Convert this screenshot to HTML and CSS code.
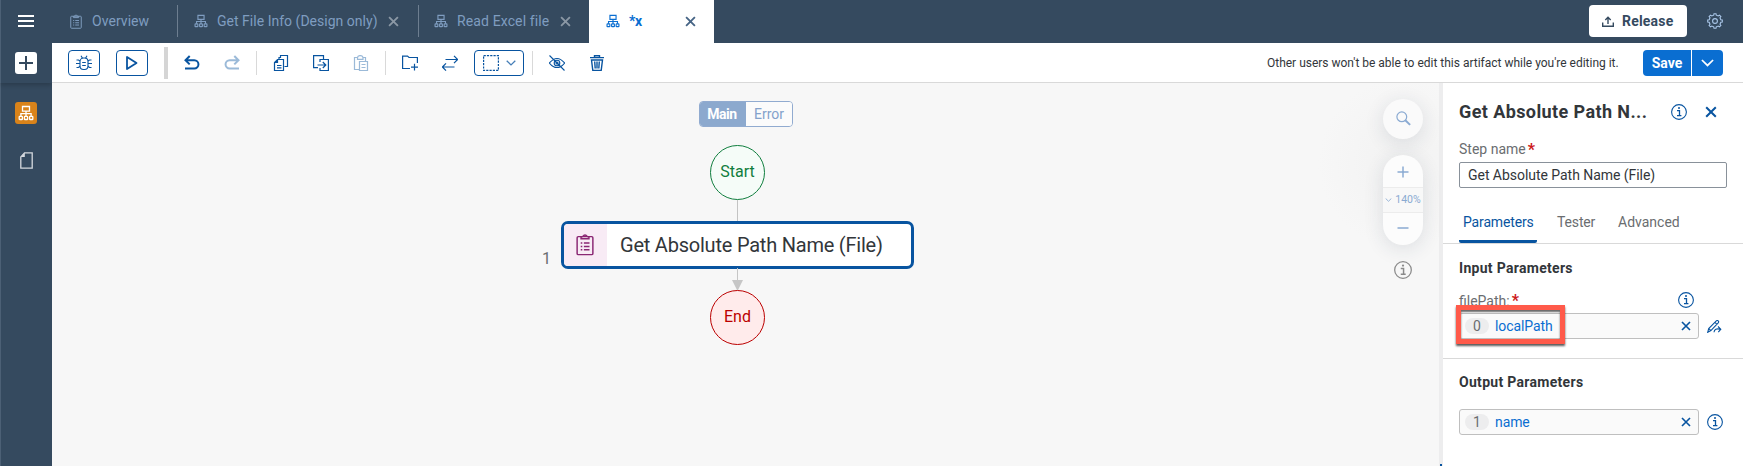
FILE: index.html
```html
<!DOCTYPE html>
<html lang="en">
<head>
<meta charset="utf-8">
<title>Process Builder</title>
<link rel="stylesheet" href="styles.css">
</head>
<body>
<svg class="defs" aria-hidden="true">
  <symbol id="flow" viewBox="0 0 16 16"><g fill="none" stroke="currentColor" stroke-width="1.300"><path d="M4.500 1.500h7v4.600h-7zM8 6v5M2.900 11V8.600h10.200V11"/><rect x="1.200" y="11.300" width="3.200" height="3.200" rx=".6"/><rect x="6.400" y="11.300" width="3.200" height="3.200" rx=".6"/><rect x="11.600" y="11.300" width="3.200" height="3.200" rx=".6"/></g></symbol>
  <symbol id="clip" viewBox="0 0 16 20"><g fill="none" stroke="currentColor" stroke-width="1.300"><rect x="1" y="3" width="14" height="16" rx="1"/><path d="M4.500 3.300v1.500h7V3.300L9.600 2.600a1.700 1.700 0 0 0-3.200 0z"/><path d="M4.200 8.700h1.400M7 8.700h5M4.200 11.700h1.400M7 11.700h5M4.200 14.700h1.400M7 14.700h5"/></g></symbol>
  <symbol id="x" viewBox="0 0 12 12"><path d="M1.200 1.200l9.600 9.600M10.800 1.200l-9.600 9.600" fill="none" stroke="currentColor" stroke-width="2"/></symbol>
  <symbol id="info" viewBox="0 0 16 16"><circle cx="8" cy="8" r="7.400" fill="none" stroke="currentColor" stroke-width="1.100"/><path d="M6 6.700h2.500v4.800M6 11.700h4.400" fill="none" stroke="currentColor" stroke-width="1.300"/><circle cx="8" cy="4.100" r="1" fill="currentColor"/></symbol>
  <symbol id="down" viewBox="0 0 10 6"><path d="M.7.7L5 4.900 9.300.7" fill="none" stroke="currentColor" stroke-width="1.300"/></symbol>
</svg>
<div class="app">
  <aside class="rail">
    <div class="rail-top">
      <svg class="menu" viewBox="0 0 16 12"><path d="M0 1h16M0 6h16M0 11h16" stroke="#fff" stroke-width="2"/></svg>
      <div class="add"><svg viewBox="0 0 14 14"><path d="M7 0v14M0 7h14" stroke="#354a5f" stroke-width="2"/></svg></div>
    </div>
    <div class="process"><svg><use href="#flow"/></svg></div>
    <svg class="file" viewBox="0 0 13 17"><path d="M4.500.8h7.700v15.400H.8V5z" fill="none" stroke="#d5d9de" stroke-width="1.300"/><path d="M.8 5L4.800.8V5z" fill="#d5d9de"/></svg>
  </aside>
  <div class="work">
    <header class="shell">
      <div class="tab t1"><svg class="ti-clip"><use href="#clip"/></svg><span>Overview</span></div>
      <div class="tab t2"><svg class="ti"><use href="#flow"/></svg><span>Get File Info (Design only)</span><svg class="tx"><use href="#x"/></svg></div>
      <div class="tab t3"><svg class="ti"><use href="#flow"/></svg><span>Read Excel file</span><svg class="tx"><use href="#x"/></svg></div>
      <div class="tab t4"><svg class="ti"><use href="#flow"/></svg><span>*x</span><svg class="tx"><use href="#x"/></svg></div>
      <button class="release"><svg viewBox="0 0 12 11"><path d="M.7 6.500v3.800h10.600V6.500M6 8V1.500M3.300 4L6 1.300 8.700 4" fill="none" stroke="currentColor" stroke-width="1.400"/></svg><span>Release</span></button>
      <svg class="gear" viewBox="0 0 16 16"><g fill="none" stroke="currentColor" stroke-width="1.100"><circle cx="8" cy="8" r="2.400"/><path d="M6.700 2.200L7 .7h2l.3 1.500 1.900.8 1.300-.9 1.400 1.400-.9 1.300.8 1.900 1.500.3v2l-1.500.3-.8 1.900.9 1.300-1.400 1.400-1.300-.9-1.900.8-.3 1.500H7l-.3-1.500-1.900-.8-1.300.9-1.400-1.400.9-1.300-.8-1.900L.7 9V7l1.500-.3.8-1.900-.9-1.300 1.400-1.400 1.300.9z"/></g></svg>
    </header>
    <div class="toolbar">
      <button class="tb bug"><svg viewBox="0 0 16 16"><g fill="none" stroke="currentColor" stroke-width="1.100"><rect x="4" y="3" width="8" height="11.500" rx="3.500"/><path d="M5 .8l1.500 2.400M11 .8L9.500 3.200M.5 5h2L4 6M15.500 5h-2L12 6M0 8.500h4M12 8.500h4M.5 12.500h2L4 11.300M15.500 12.500h-2L12 11.300M6.200 7.500h3.600M6.200 10.500h3.600"/></g></svg></button>
      <button class="tb play"><svg viewBox="0 0 16 16"><path d="M3 2v12L12.500 8z" fill="none" stroke="currentColor" stroke-width="1.800" stroke-linejoin="round"/></svg></button>
      <i class="grip"></i>
      <div class="tool"><svg viewBox="0 0 16 16"><path d="M1.500 5.200h8.800a4 4 0 0 1 0 8.300H1M5.700 1L1.500 5.200l4.200 4.200" fill="none" stroke="currentColor" stroke-width="2"/></svg></div>
      <div class="tool off"><svg viewBox="0 0 16 16"><path d="M14.500 5.200H5.700a4 4 0 0 0 0 8.300H15M10.300 1l4.200 4.200-4.200 4.200" fill="none" stroke="currentColor" stroke-width="2"/></svg></div>
      <i class="sep"></i>
      <div class="tool"><svg viewBox="0 0 16 16"><path d="M4.500 4.500h6v11h-9v-8zM1.500 7.500h3v-3M6 4V2.500h1.500v-2H14.500v11h-3M4 10.500h4.500M4 12.800h4.500" fill="none" stroke="currentColor" stroke-width="1.200"/></svg></div>
      <div class="tool"><svg viewBox="0 0 16 16"><path d="M10.500 4V.6H.6v12H5M7 7V4.500h8.400v11H7V13M4.500 10h8M9.800 7l3 3-3 3" fill="none" stroke="currentColor" stroke-width="1.200"/></svg></div>
      <div class="tool off"><svg viewBox="0 0 16 16"><path d="M6 14.500H1.500v-12h3v1.800H10V2.500h2.500V6M4.500 2.500a2.800 2.400 0 0 1 5.500 0M6.500 6.500h8v9h-8zM8.500 9.500h4M8.500 12.500h4" fill="none" stroke="currentColor" stroke-width="1.200"/></svg></div>
      <i class="sep"></i>
      <div class="tool"><svg viewBox="0 0 16 16"><path d="M15.400 8V2.500H7L5.500 1.100H.6v12.400H8M12.500 8.800v6.700M9 12.200h7" fill="none" stroke="currentColor" stroke-width="1.200"/></svg></div>
      <div class="tool"><svg viewBox="0 0 16 16"><path d="M3.500 4.500h12M12 .9l3.600 3.600L12 8.100M12.500 12H.5M4 8.400L.4 12 4 15.600" fill="none" stroke="currentColor" stroke-width="1.200"/></svg></div>
      <button class="tb select"><svg class="marquee" viewBox="0 0 16 16"><rect x=".6" y=".6" width="14.800" height="14.800" fill="none" stroke="currentColor" stroke-width="1.200" stroke-dasharray="2.200 1.100"/></svg><svg class="chev"><use href="#down"/></svg></button>
      <i class="sep last"></i>
      <div class="tool"><svg viewBox="0 0 16 16"><g fill="none" stroke="currentColor" stroke-width="1.100"><path d="M.4 8q7.600-9 15.200 0-7.600 9-15.200 0zM.5.500l15 15"/><circle cx="8" cy="8" r="2.800"/><circle cx="8" cy="8" r="1"/></g></svg></div>
      <div class="tool"><svg viewBox="0 0 16 16"><path d="M1 2.600h14M5.500 2.200V.7h5v1.500M2.500 5h11l-1.300 10.400H3.800zM5.700 6.500l.5 7M8 6.500v7M10.300 6.500l-.5 7" fill="none" stroke="currentColor" stroke-width="1.400"/></svg></div>
      <span class="notice">Other users won't be able to edit this artifact while you're editing it.</span>
      <div class="save"><button class="save-main"><span>Save</span></button><button class="save-more"><svg><use href="#down"/></svg></button></div>
    </div>
    <div class="body">
      <main class="canvas">
        <div class="segment"><span class="seg-on"><span>Main</span></span><span class="seg-off"><span>Error</span></span></div>
        <div class="node start"><span>Start</span></div>
        <i class="edge"></i>
        <div class="step"><div class="step-icon"><svg><use href="#clip"/></svg></div><span>Get Absolute Path Name (File)</span></div>
        <svg class="arrow" viewBox="0 0 12 23"><path d="M6.500 0v13" stroke="#c6c6c6" stroke-width="1"/><path d="M1 12h11L6.500 23z" fill="#c6c6c6"/></svg>
        <div class="node end"><span>End</span></div>
        <span class="index">1</span>
        <div class="controls">
          <div class="search"><svg viewBox="0 0 15 15"><circle cx="5.800" cy="5.800" r="4.900" fill="none" stroke="currentColor" stroke-width="1.200"/><path d="M9.300 9.300l4.800 4.600" stroke="currentColor" stroke-width="2"/></svg></div>
          <div class="zoom">
            <svg class="zin" viewBox="0 0 12 12"><path d="M6 .5v11M.5 6h11" stroke="currentColor" stroke-width="1.500"/></svg>
            <div class="level"><svg><use href="#down"/></svg><span>140%</span></div>
            <svg class="zout" viewBox="0 0 12 12"><path d="M.5 6h11" stroke="currentColor" stroke-width="1.500"/></svg>
          </div>
          <svg class="help"><use href="#info"/></svg>
        </div>
      </main>
      <div class="splitter"></div>
      <section class="panel">
        <div class="panel-head"><h1>Get Absolute Path N...</h1><svg class="pi"><use href="#info"/></svg><svg class="px"><use href="#x"/></svg></div>
        <label class="step-label"><span>Step name</span><b>*</b></label>
        <div class="field"><span>Get Absolute Path Name (File)</span></div>
        <nav class="ptabs"><span class="on"><span>Parameters</span></span><span class="pt2">Tester</span><span class="pt3">Advanced</span></nav>
        <div class="group inputs">
          <h2>Input Parameters</h2>
          <div class="param-label"><span>filePath:</span><b>*</b><svg class="pi"><use href="#info"/></svg></div>
          <div class="row"><div class="token"><em>0</em><span>localPath</span><svg><use href="#x"/></svg><i class="highlight"></i></div><svg class="pen" viewBox="0 0 15 13"><path d="M.7 12.300l1-3.800L9.300.9q1-.8 1.900 0t0 1.900L3.900 10.600zM1.900 8.600l2 2M8 2.300l2 2M7 12.300c.3-3 2.500-4 6-3.200M11 6.500l2.800 2.700-2.500 2.900" fill="none" stroke="currentColor" stroke-width="1.100"/></svg></div>
        </div>
        <div class="group outputs">
          <h2>Output Parameters</h2>
          <div class="row"><div class="token"><em>1</em><span>name</span><svg><use href="#x"/></svg></div><svg class="pi"><use href="#info"/></svg></div>
        </div>
      </section>
    </div>
  </div>
</div>
</body>
</html>
```

FILE: styles.css
```css
* { box-sizing: border-box; }
body { margin: 0; font: 14px/18px Roboto, "Noto Sans", sans-serif; color: #32363a; overflow: hidden; }
svg { display: block; flex: none; }
button { font: inherit; padding: 0; margin: 0; }
h1, h2 { margin: 0; }
span { white-space: nowrap; }
.defs { position: absolute; width: 0; height: 0; }
.app { display: flex; width: 1743px; height: 466px; }
.rail { width: 52px; background: linear-gradient(#4c6075, #4c6075) 0 0 / 1px 100% no-repeat #354a5f; display: flex; flex-direction: column; align-items: center; }
.rail-top { width: 100%; height: 83px; padding-top: 15px; display: flex; flex-direction: column; align-items: center; box-shadow: 0 2px 5px rgba(0,0,0,.22); }
.menu { width: 16px; height: 12px; }
.add { width: 22px; height: 22px; margin-top: 25px; background: #fff; border-radius: 3px; display: grid; place-items: center; }
.add svg { width: 14px; height: 14px; }
.process { width: 22px; height: 22px; margin-top: 19px; background: #d9831a; border-radius: 3px; color: #fff; display: grid; place-items: center; }
.process svg { width: 16px; height: 16px; }
.file { width: 13px; height: 17px; margin-top: 28px; }
.work { width: 1691px; display: flex; flex-direction: column; }
.shell { height: 43px; background: #354a5f; display: flex; align-items: center; color: #7f9dc0; font-size: 14px; }
.tab { height: 43px; display: flex; align-items: center; position: relative; padding-bottom: 1px; }
.tab > span { height: 20px; line-height: 20px; }
.t1 { width: 126px; padding-left: 18px; }
.t2 { width: 241px; padding-left: 16px; }
.t3 { width: 170px; padding-left: 15px; }
.t4 { width: 125px; padding-left: 17px; background: #fff; color: #0a6ed1; font-weight: 700; }
.t1::after, .t2::after { content: ""; position: absolute; right: 0; top: 5px; height: 32px; width: 1px; background: #6d7e90; }
.ti { width: 14px; height: 14px; margin-right: 9px; }
.ti-clip { width: 12px; height: 15px; margin-right: 10px; }
.tx { width: 11px; height: 11px; color: #8b98a5; }
.t2 .tx { margin-left: 11px; }
.t3 .tx { margin-left: 12px; }
.t4 .tx { margin-left: 43px; color: #466485; }
.t1 > span { width: 57px; letter-spacing: .05px; }
.t2 > span { width: 160px; letter-spacing: .02px; }
.t3 > span { width: 91px; letter-spacing: .12px; }
.t4 > span { width: 13px; letter-spacing: -.3px; }
.release { width: 98px; height: 32px; margin-left: auto; margin-bottom: 1px; background: #fff; border: 0; border-radius: 4px; color: #354a5f; font-weight: 700; display: flex; align-items: center; padding-left: 13px; letter-spacing: .2px; }
.release svg { width: 12px; height: 11px; margin-right: 8px; }
.gear { width: 16px; height: 16px; margin: 0 20px 1px; color: #a9c6e8; }
.toolbar { height: 40px; background: #fff; border-bottom: 1px solid #d9d9d9; padding-left: 16px; display: flex; align-items: center; color: #0854a0; }
.tb { height: 26px; background: #fff; border: 1px solid #0854a0; border-radius: 4px; color: #0854a0; display: flex; align-items: center; justify-content: center; }
.bug, .play { width: 32px; margin-right: 16px; }
.tb svg, .tool svg { width: 16px; height: 16px; }
.grip { width: 4px; height: 32px; background: #d5d5d5; margin-right: 4px; }
.tool { width: 40px; display: grid; place-items: center; }
.off { opacity: .4; }
.sep { width: 1px; height: 24px; margin: 0 4px; background: #d9d9d9; }
.select { width: 50px; margin-left: 4px; gap: 7px; }
.tb .chev { width: 10px; height: 6px; opacity: .75; }
.last { margin-left: 8px; }
.notice { margin-left: auto; width: 352px; margin-right: 24px; color: #32363a; font-size: 12px; letter-spacing: -.01px; }
.save { display: flex; gap: 1px; margin-right: 20px; }
.save button { height: 26px; border: 0; background: #0a6ed1; color: #fff; font-weight: 700; display: grid; place-items: center; }
.save .save-main { width: 48px; border-radius: 4px 0 0 4px; }
.save .save-more { width: 31px; border-radius: 0 4px 4px 0; }
.save svg { width: 13px; height: 8px; }
.body { display: flex; height: 383px; }
.canvas { width: 1387px; background: radial-gradient(circle at 1351px 80px, #f2f2f2, #f7f7f7 85px); position: relative; }
.segment, .node, .edge, .step, .arrow, .index, .controls { position: absolute; }
.segment { left: 647px; top: 18px; width: 94px; height: 26px; display: flex; border: 1px solid #91abd0; border-radius: 4px; color: #84a2cb; overflow: hidden; line-height: 16px; }
.seg-on, .seg-off { display: grid; place-items: center; }
.seg-on { width: 46px; padding-right: 2px; background: #8ca9ce; color: #fff; font-weight: 700; letter-spacing: -.5px; }
.seg-off { flex: 1; background: #fbfbfb; }
.node { left: 658px; width: 55px; height: 55px; border-radius: 50%; display: grid; place-items: center; font-size: 16px; padding-bottom: 1px; }
.start { top: 62px; padding-bottom: 2px; border: 1px solid #107e3e; color: #107e3e; background: #f5fcf8; }
.end { top: 207px; border: 1px solid #b00; color: #b00; background: #ffebeb; }
.edge { left: 685px; top: 117px; width: 1px; height: 22px; background: #c3c3c3; }
.step { left: 509px; top: 138px; width: 353px; height: 48px; border: 3px solid #0854a0; border-radius: 7px; background: #fff; display: flex; align-items: center; overflow: hidden; }
.step-icon { width: 43px; height: 42px; background: #f8ebf5; color: #8a2673; display: grid; place-items: center; margin-right: 13px; padding-right: 2px; }
.step-icon svg { width: 18px; height: 23px; margin-bottom: 2px; }
.step > span { font-size: 20px; line-height: 26px; letter-spacing: -.22px; }
.arrow { left: 679px; top: 185px; width: 12px; height: 23px; }
.index { left: 490px; top: 167px; font-size: 16px; color: #6a6d70; }
.controls { left: 1331px; top: 16px; width: 40px; display: flex; flex-direction: column; align-items: center; color: #8aaad2; }
.search { width: 40px; height: 40px; border-radius: 50%; background: #fafafa; box-shadow: 0 4px 20px rgba(34,53,72,.12); display: grid; place-items: center; }
.search svg { width: 15px; height: 15px; margin-bottom: 2px; }
.zoom { margin-top: 16px; width: 40px; height: 90px; border-radius: 20px; background: #fcfcfc; box-shadow: 0 4px 20px rgba(34,53,72,.12); display: flex; flex-direction: column; align-items: center; }
.zin { width: 12px; height: 12px; margin: 11px 0 9px; }
.level { width: 40px; height: 26px; border: solid #ececec; border-width: 1px 0; background: #f8f8f8; font-size: 10.5px; display: flex; align-items: center; justify-content: center; gap: 3px; }
.level svg { width: 7px; height: 4px; }
.zout { width: 12px; height: 12px; margin-top: 9px; }
.help { width: 18px; height: 18px; margin-top: 16px; color: #8a8a8a; }
.splitter { width: 4px; background: linear-gradient(#0854a0, #0854a0) 1px 381px / 2px 2px no-repeat #ededee; }
.panel { width: 300px; background: #fff; }
.panel-head { height: 58px; padding-left: 16px; display: flex; align-items: center; color: #0854a0; }
.panel-head h1 { width: 212px; font-size: 18px; line-height: 24px; color: #32363a; letter-spacing: .4px; white-space: nowrap; }
.pi { width: 16px; height: 16px; }
.px { width: 12px; height: 12px; margin-left: 18px; }
.step-label { height: 21px; padding-left: 16px; display: flex; color: #6a6d70; line-height: 17px; }
b { color: #cc1919; font-size: 16px; line-height: 18px; margin-left: 2px; }
.field { width: 268px; height: 26px; margin-left: 16px; border: 1px solid #89919a; border-radius: 2px; padding-left: 8px; line-height: 24px; color: #32363a; }
.field span { letter-spacing: -.04px; }
.ptabs { height: 56px; border-bottom: 1px solid #d9d9d9; padding-left: 16px; display: flex; color: #6a6d70; line-height: 68px; }
.on { width: 78px; height: 55px; padding-left: 4px; color: #0854a0; border-bottom: 3px solid #0854a0; border-radius: 0 0 2px 2px; letter-spacing: -.15px; }
.pt2 { width: 61px; margin-left: 20px; letter-spacing: -.15px; }
.group { padding-left: 16px; }
.inputs { height: 115px; border-bottom: 1px solid #d9d9d9; padding-top: 15px; }
.outputs { padding-top: 14px; }
.group h2 { font-size: 14px; line-height: 18px; letter-spacing: .3px; }
.param-label { height: 21px; margin-top: 15px; display: flex; color: #6a6d70; width: 235px; line-height: 18px; }
.param-label .pi { margin-left: auto; color: #0854a0; }
.row { display: flex; align-items: center; color: #0854a0; gap: 8px; }
.token { width: 240px; height: 26px; border: 1px solid #bfbfbf; border-radius: 3px; background: #fafafa; display: flex; align-items: center; position: relative; padding-left: 5px; color: #0a6ed1; letter-spacing: -.1px; }
.token em { width: 24px; height: 16px; border-radius: 8px; background: #ededee; color: #6a6d70; font-style: normal; line-height: 16px; text-align: center; margin-right: 6px; }
.token svg { width: 10px; height: 10px; margin-left: auto; margin-right: 7px; color: #0854a0; }
.pen { width: 15px; height: 13px; }
.outputs .row { margin-top: 18px; }
.highlight { position: absolute; left: -4px; top: -9px; width: 109px; height: 39px; border: 5px solid #ff5a4a; box-shadow: 0 2px 2px rgba(0,0,0,.65), inset 0 2px 2px rgba(0,0,0,.6); }
```
